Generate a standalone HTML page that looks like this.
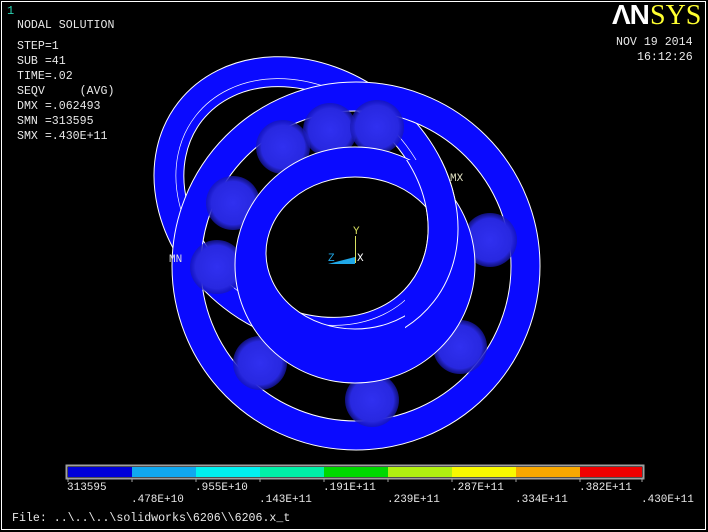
<!DOCTYPE html>
<html><head><meta charset="utf-8"><style>
html,body{margin:0;padding:0;background:#000;}
svg{display:block}
.t{font-family:"Liberation Mono",monospace;font-size:11.6px;fill:#e8e8e8;white-space:pre}
</style></head><body>
<svg width="708" height="532" viewBox="0 0 708 532" xmlns="http://www.w3.org/2000/svg">
<defs>
<radialGradient id="b" cx="0.5" cy="0.5" r="0.5">
<stop offset="0" stop-color="#3030f0"/><stop offset="0.8" stop-color="#2828e0"/><stop offset="1" stop-color="#1818b0" stop-opacity="0.7"/>
</radialGradient>
<clipPath id="rt"><rect x="405" y="160" width="200" height="372"/></clipPath>
</defs>
<rect x="0" y="0" width="708" height="532" fill="#000"/>
<rect x="1.5" y="1.5" width="704" height="528" fill="none" stroke="#fff" stroke-width="1"/>
<text x="7" y="14" style="font-family:'Liberation Mono',monospace;font-size:12px;fill:#2bd0b0">1</text>
<g class="t">
<text x="17" y="28">NODAL SOLUTION</text>
<text x="17" y="49">STEP=1</text>
<text x="17" y="64">SUB =41</text>
<text x="17" y="79">TIME=.02</text>
<text x="17" y="94" xml:space="preserve">SEQV     (AVG)</text>
<text x="17" y="109">DMX =.062493</text>
<text x="17" y="124">SMN =313595</text>
<text x="17" y="139">SMX =.430E+11</text>
<text x="616" y="45">NOV 19 2014</text>
<text x="637" y="60">16:12:26</text>
</g>
<text x="612" y="24" style="font-family:'Liberation Sans',sans-serif;font-weight:bold;font-size:28px;fill:#fff;letter-spacing:-1px">ΛN</text>
<text x="650" y="24" style="font-family:'Liberation Serif',serif;font-size:28px;fill:#ffff30">SYS</text>

<g transform="translate(306,202) rotate(38)">
<path fill-rule="evenodd" fill="#0a0aff" stroke="#fff" stroke-width="1" d="M-162,0a162,134 0 1,0 324,0a162,134 0 1,0 -324,0Z M-132,0a132,104 0 1,0 264,0a132,104 0 1,0 -264,0Z"/>
<ellipse cx="0" cy="0" rx="140" ry="112" fill="none" stroke="#fff" stroke-width="0.7"/>
</g>
<path fill-rule="evenodd" fill="#0a0aff" stroke="#fff" stroke-width="1" d="M172,266a184,184 0 1,0 368,0a184,184 0 1,0 -368,0Z M201,266a155,155 0 1,0 310,0a155,155 0 1,0 -310,0Z"/>
<g fill="url(#b)">
<circle cx="283" cy="147" r="27"/><circle cx="330" cy="130" r="27"/><circle cx="377" cy="127" r="27"/>
<circle cx="233" cy="203" r="27"/><circle cx="217" cy="267" r="27"/><circle cx="490" cy="240" r="27"/>
<circle cx="260" cy="363" r="27"/><circle cx="460" cy="347" r="27"/><circle cx="372" cy="400" r="27"/>
</g>
<path fill-rule="evenodd" fill="#0a0aff" stroke="#fff" stroke-width="1" d="M235,265a120,118 0 1,0 240,0a120,118 0 1,0 -240,0Z M266,253a89,76 0 1,0 178,0a89,76 0 1,0 -178,0Z"/>
<g clip-path="url(#rt)">
<g transform="translate(306,202) rotate(38)">
<path fill-rule="evenodd" fill="#0a0aff" stroke="#fff" stroke-width="1" d="M-162,0a162,134 0 1,0 324,0a162,134 0 1,0 -324,0Z M-132,0a132,104 0 1,0 264,0a132,104 0 1,0 -264,0Z"/>
</g>
</g>
<line x1="355.5" y1="236" x2="355.5" y2="263" stroke="#d8e060" stroke-width="1"/>
<polygon points="328,264 355,257 355,264" fill="#20a8e8"/>
<text x="353" y="234" style="font-family:'Liberation Mono',monospace;font-size:11px;fill:#d8e060">Y</text>
<text x="328" y="261" style="font-family:'Liberation Mono',monospace;font-size:11px;fill:#20a8e8">Z</text>
<text x="357" y="261" style="font-family:'Liberation Mono',monospace;font-size:11px;fill:#fff">X</text>
<text x="450" y="181" style="font-family:'Liberation Mono',monospace;font-size:11px;fill:#e0e0c0">MX</text>
<text x="169" y="262" style="font-family:'Liberation Mono',monospace;font-size:11px;fill:#e0e0e0">MN</text>

<rect x="66.5" y="465.5" width="577" height="13" fill="none" stroke="#a0a0a0" stroke-width="2"/>
<rect x="68" y="467" width="64" height="10" fill="#0000d8"/>
<rect x="132" y="467" width="64" height="10" fill="#10a8f0"/>
<rect x="196" y="467" width="64" height="10" fill="#00f0f0"/>
<rect x="260" y="467" width="64" height="10" fill="#00f0a8"/>
<rect x="324" y="467" width="64" height="10" fill="#00d800"/>
<rect x="388" y="467" width="64" height="10" fill="#b0f010"/>
<rect x="452" y="467" width="64" height="10" fill="#f8f800"/>
<rect x="516" y="467" width="64" height="10" fill="#f8a800"/>
<rect x="580" y="467" width="62" height="10" fill="#f00000"/>
<g stroke="#a0a0a0" stroke-width="1">
<line x1="68" y1="479" x2="68" y2="482"/><line x1="132" y1="479" x2="132" y2="482"/><line x1="196" y1="479" x2="196" y2="482"/><line x1="260" y1="479" x2="260" y2="482"/><line x1="324" y1="479" x2="324" y2="482"/><line x1="388" y1="479" x2="388" y2="482"/><line x1="452" y1="479" x2="452" y2="482"/><line x1="516" y1="479" x2="516" y2="482"/><line x1="580" y1="479" x2="580" y2="482"/><line x1="642" y1="479" x2="642" y2="482"/>
</g>
<g class="t" style="font-size:11px">
<text x="67" y="490">313595</text>
<text x="131" y="502">.478E+10</text>
<text x="195" y="490">.955E+10</text>
<text x="259" y="502">.143E+11</text>
<text x="323" y="490">.191E+11</text>
<text x="387" y="502">.239E+11</text>
<text x="451" y="490">.287E+11</text>
<text x="515" y="502">.334E+11</text>
<text x="579" y="490">.382E+11</text>
<text x="641" y="502">.430E+11</text>
</g>
<text x="12" y="521" class="t">File: ..\..\..\solidworks\6206\\6206.x_t</text>
</svg>
</body></html>
